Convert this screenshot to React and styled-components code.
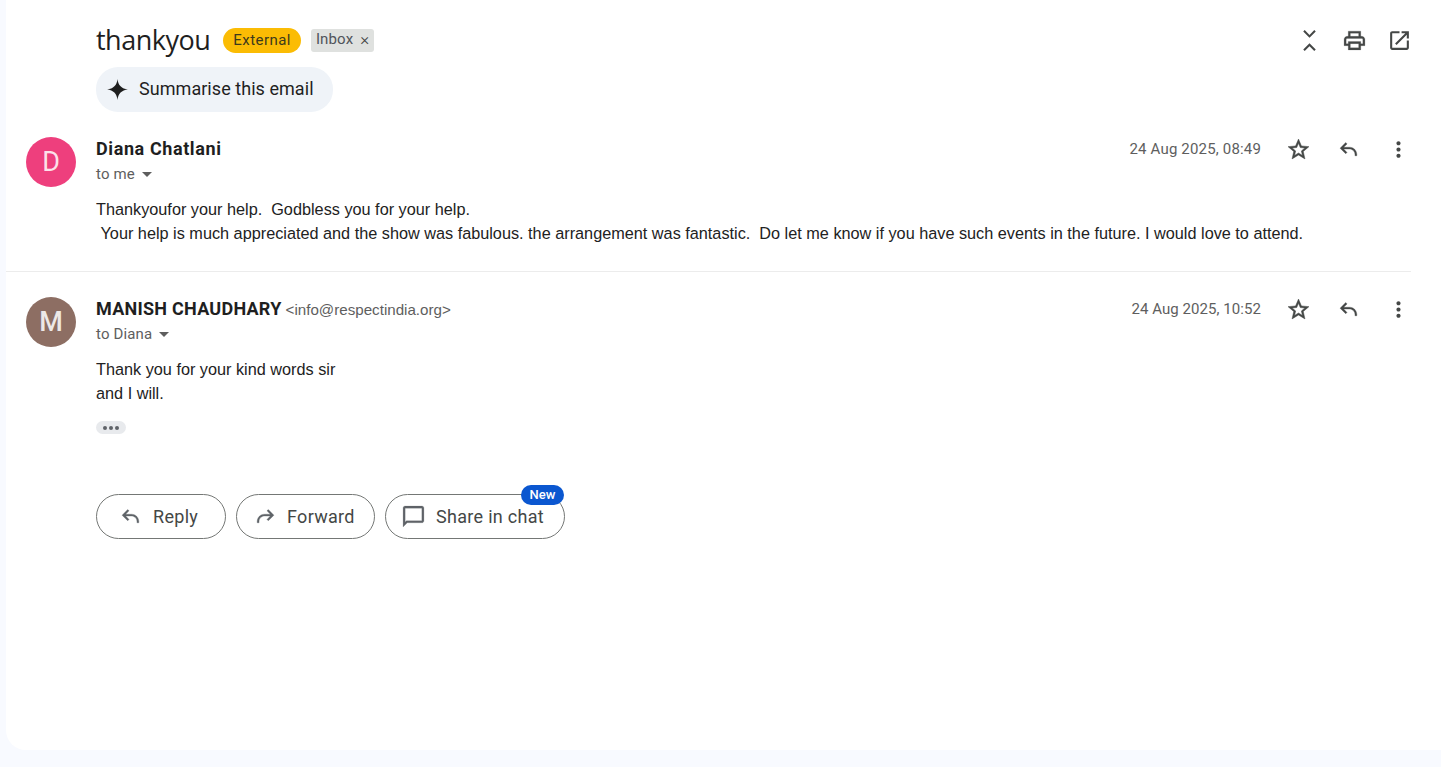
import React from 'react'
import styled, { createGlobalStyle } from 'styled-components'

const GlobalStyle = createGlobalStyle`
  html, body {
    margin: 0;
    height: 100%;
    background: #f8faff;
  }
  body {
    font-family: "Roboto", "Liberation Sans", sans-serif;
    overflow: hidden;
  }
`

const Page = styled.div`
  height: 767px;
  padding: 0 0 17px 6px;
  box-sizing: border-box;
`

const Panel = styled.main`
  height: 100%;
  background: #fff;
  border-bottom-left-radius: 20px;
  box-sizing: border-box;
  padding-top: 23px;
`

const Header = styled.header`
  padding: 0 29px 0 90px;
`

const TitleRow = styled.div`
  display: flex;
  align-items: center;
  height: 34px;
`

const Subject = styled.h1`
  margin: 0 13px 0 0;
  font-family: "Open Sans", sans-serif;
  font-size: 27px;
  font-weight: 400;
  letter-spacing: -0.5px;
  line-height: 34px;
  color: #1f1f1f;
`

const ExternalBadge = styled.span`
  height: 25px;
  padding: 0 10px;
  display: flex;
  align-items: center;
  border-radius: 13px;
  background: #fbbc04;
  color: #3c3a1c;
  font-size: 15px;
  letter-spacing: 0.45px;
`

const LabelChip = styled.span`
  height: 23px;
  margin-left: 10px;
  padding: 0 5px 2px;
  display: flex;
  align-items: center;
  gap: 7px;
  border-radius: 3px;
  background: #dfe1df;
  color: #50545a;
  font-size: 15px;
  letter-spacing: 0.15px;
  box-sizing: border-box;
`

const ChipClose = styled.span`
  font-size: 17px;
  font-weight: 300;
  color: #444;
  line-height: 1;
`

const HeaderIcons = styled.div`
  margin-left: auto;
  display: flex;
  gap: 20px;
  color: #444746;
`

const SummariseButton = styled.button`
  margin-top: 10px;
  height: 45px;
  width: 237px;
  padding: 0 0 2px 9px;
  display: flex;
  align-items: center;
  gap: 9px;
  border: 0;
  border-radius: 22px;
  background: #eff3f8;
  color: #1f1f1f;
  font-family: "Roboto", sans-serif;
  font-size: 18px;
  letter-spacing: 0.05px;

  svg {
    margin-top: 2px;
  }
`

const Message = styled.article`
  display: flex;
  gap: 20px;
  padding: 0 30px 0 20px;
  margin-top: 25px;
`

const Avatar = styled.div`
  width: 50px;
  height: 50px;
  flex: none;
  border-radius: 50%;
  background: ${props => props.$color};
  color: rgba(255, 255, 255, 0.85);
  display: flex;
  align-items: center;
  justify-content: center;
  font-size: 27px;
  font-weight: ${props => props.$weight};
`

const MessageBody = styled.div`
  flex: 1;
  min-width: 0;
`

const MetaRow = styled.div`
  display: flex;
  align-items: flex-start;
  justify-content: space-between;
`

const Sender = styled.div`
  display: flex;
  align-items: baseline;
  gap: 4px;
  height: 24px;
  line-height: 24px;
`

const SenderName = styled.span`
  font-family: "Roboto", sans-serif;
  font-size: 18px;
  font-weight: 700;
  letter-spacing: ${props => props.$spacing}px;
  color: #1f1f1f;
`

const SenderEmail = styled.span`
  font-family: "Liberation Sans", sans-serif;
  font-size: 15.15px;
  color: #5e5e5e;
`

const Recipient = styled.div`
  margin-top: 1px;
  height: 24px;
  display: flex;
  align-items: center;
  gap: 7px;
  font-size: 15px;
  letter-spacing: 0.15px;
  color: #5e5e5e;
`

const Caret = styled.span`
  width: 0;
  height: 0;
  border-left: 5px solid transparent;
  border-right: 5px solid transparent;
  border-top: 5px solid #5e5e5e;
`

const MetaRight = styled.div`
  display: flex;
  align-items: center;
  height: 24px;
  color: #444746;
`

const DateText = styled.span`
  font-size: 15px;
  letter-spacing: ${props => props.$spacing}px;
  color: #5e5e5e;
  margin-right: 25px;
`

const MessageIcons = styled.div`
  display: flex;
  gap: 25px;
  margin-top: 1px;
`

const BodyText = styled.div`
  margin-top: 11px;
  font-family: "Liberation Sans", sans-serif;
  font-size: 16.25px;
  line-height: 24px;
  color: #222;
  white-space: pre-wrap;
`

const Divider = styled.hr`
  margin: 26px 30px 0 0;
  border: 0;
  border-top: 1px solid #ececec;
`

const Ellipsis = styled.div`
  margin-top: 16px;
  width: 30px;
  height: 13px;
  border-radius: 7px;
  background: #e8eaed;
  display: flex;
  align-items: center;
  justify-content: center;
  gap: 2px;
`

const Dot = styled.span`
  width: 4px;
  height: 4px;
  border-radius: 50%;
  background: #5f6368;
`

const Actions = styled.div`
  margin: 60px 0 0 90px;
  display: flex;
  gap: 10px;
`

const ActionButton = styled.button`
  position: relative;
  width: ${props => props.$width}px;
  height: 45px;
  padding: 0 0 0 ${props => props.$pad}px;
  display: flex;
  align-items: center;
  gap: ${props => props.$gap}px;
  background: #fff;
  border: 1px solid #747775;
  border-radius: 23px;
  box-sizing: border-box;
  color: #444746;
  font-family: "Roboto", sans-serif;
  font-size: 18px;
  letter-spacing: 0.3px;

  svg {
    color: #5f6368;
  }
`

const NewBadge = styled.span`
  position: absolute;
  top: -10px;
  right: 0;
  width: 43px;
  height: 20px;
  border-radius: 10px;
  background: #0b57d0;
  color: #fff;
  font-size: 13px;
  font-weight: 500;
  letter-spacing: 0;
  line-height: 20px;
  text-align: center;
`

const Icon = styled.svg`
  width: 25px;
  height: 25px;
  flex: none;
  fill: currentColor;
  stroke: currentColor;
  stroke-width: ${props => props.$weight};
  display: block;
`

const paths = {
  star: 'M22 9.24l-7.19-.62L12 2 9.19 8.63 2 9.24l5.46 4.73L5.82 21 12 17.27 18.18 21l-1.63-7.03L22 9.24zM12 15.4l-3.76 2.27 1-4.28-3.32-2.88 4.38-.38L12 6.1l1.71 4.04 4.38.38-3.32 2.88 1 4.28L12 15.4z',
  reply: 'M20 18h-1.8v-1.2c0-2.9-2.3-5.2-5.2-5.2H7.4l3.2 3.2-1.3 1.3L3.9 10.7l5.4-5.4 1.3 1.3-3.2 3.2H13c3.9 0 7 3.1 7 7V18z',
  forward: 'M4 18h1.800v-1.200c0-2.900 2.300-5.200 5.200-5.200h5.600l-3.200 3.200 1.300 1.300 5.400-5.400-5.400-5.400-1.300 1.300 3.200 3.200H11c-3.900 0-7 3.100-7 7V18z',
  dots: 'M12 8c1.100 0 2-.9 2-2s-.9-2-2-2-2 .9-2 2 .9 2 2 2zm0 2c-1.100 0-2 .9-2 2s.9 2 2 2 2-.9 2-2-.9-2-2-2zm0 6c-1.100 0-2 .9-2 2s.9 2 2 2 2-.9 2-2-.9-2-2-2z',
  print: 'M19 8h-1V3H6v5H5c-1.660 0-3 1.340-3 3v6h4v4h12v-4h4v-6c0-1.660-1.340-3-3-3zM8 5h8v3H8V5zm8 14H8v-4h8v4zm4-4h-2v-2H6v2H4v-4c0-.55.45-1 1-1h14c.55 0 1 .45 1 1v4z',
  open: 'M19 19H5V5h7V3H5c-1.110 0-2 .9-2 2v14c0 1.100.89 2 2 2h14c1.100 0 2-.9 2-2v-7h-2v7zM14 3v2h3.590l-9.830 9.830 1.410 1.410L19 6.410V10h2V3h-7z',
  collapse: 'M7.400 2 12 6.600 16.600 2 18 3.400l-6 6-6-6L7.400 2zM12 14.600l6 6-1.400 1.400-4.600-4.600L7.400 22 6 20.600l6-6z',
  chat: 'M20 2H4c-1.100 0-2 .9-2 2v18l4-4h14c1.100 0 2-.9 2-2V4c0-1.100-.9-2-2-2zm0 14H5.200L4 17.200V4h16v12z',
  spark: 'M12 2c.6 6 4 9.400 10 10-6 .6-9.400 4-10 10-.6-6-4-9.400-10-10 6-.6 9.400-4 10-10z',
}

const Glyph = ({ name, weight = 0 }) => (
  <Icon viewBox="0 0 24 24" $weight={weight} aria-hidden="true">
    <path d={paths[name]} />
  </Icon>
)

const MessageTools = () => (
  <MessageIcons>
    <Glyph name="star" weight={0.5} />
    <Glyph name="reply" weight={0.3} />
    <Glyph name="dots" />
  </MessageIcons>
)

export default function App() {
  return (
    <Page>
      <GlobalStyle />
      <Panel>
        <Header>
          <TitleRow>
            <Subject>thankyou</Subject>
            <ExternalBadge>External</ExternalBadge>
            <LabelChip>Inbox <ChipClose>×</ChipClose></LabelChip>
            <HeaderIcons>
              <Glyph name="collapse" />
              <Glyph name="print" weight={0.2} />
              <Glyph name="open" />
            </HeaderIcons>
          </TitleRow>
          <SummariseButton><Glyph name="spark" />Summarise this email</SummariseButton>
        </Header>

        <Message>
          <Avatar $color="#ee3f7d" $weight={400}>D</Avatar>
          <MessageBody>
            <MetaRow>
              <Sender><SenderName $spacing={0.6}>Diana Chatlani</SenderName></Sender>
              <MetaRight>
                <DateText $spacing={0.17}>24 Aug 2025, 08:49</DateText>
                <MessageTools />
              </MetaRight>
            </MetaRow>
            <Recipient>to me <Caret /></Recipient>
            <BodyText>{'Thankyoufor your help.  Godbless you for your help.\n Your help is much appreciated and the show was fabulous. the arrangement was fantastic.  Do let me know if you have such events in the future. I would love to attend.'}</BodyText>
          </MessageBody>
        </Message>
        <Divider />

        <Message>
          <Avatar $color="#8d6e63" $weight={500}>M</Avatar>
          <MessageBody>
            <MetaRow>
              <Sender>
                <SenderName $spacing={0.25}>MANISH CHAUDHARY</SenderName>
                <SenderEmail>&lt;info@respectindia.org&gt;</SenderEmail>
              </Sender>
              <MetaRight>
                <DateText $spacing={0.06}>24 Aug 2025, 10:52</DateText>
                <MessageTools />
              </MetaRight>
            </MetaRow>
            <Recipient>to Diana <Caret /></Recipient>
            <BodyText>{'Thank you for your kind words sir\nand I will.'}</BodyText>
            <Ellipsis><Dot /><Dot /><Dot /></Ellipsis>
          </MessageBody>
        </Message>

        <Actions>
          <ActionButton $width={130} $pad={21} $gap={10}><Glyph name="reply" weight={0.3} />Reply</ActionButton>
          <ActionButton $width={139} $pad={16} $gap={9}><Glyph name="forward" weight={0.3} />Forward</ActionButton>
          <ActionButton $width={180} $pad={15} $gap={10}>
            <Glyph name="chat" weight={0.2} />Share in chat
            <NewBadge>New</NewBadge>
          </ActionButton>
        </Actions>
      </Panel>
    </Page>
  )
}
